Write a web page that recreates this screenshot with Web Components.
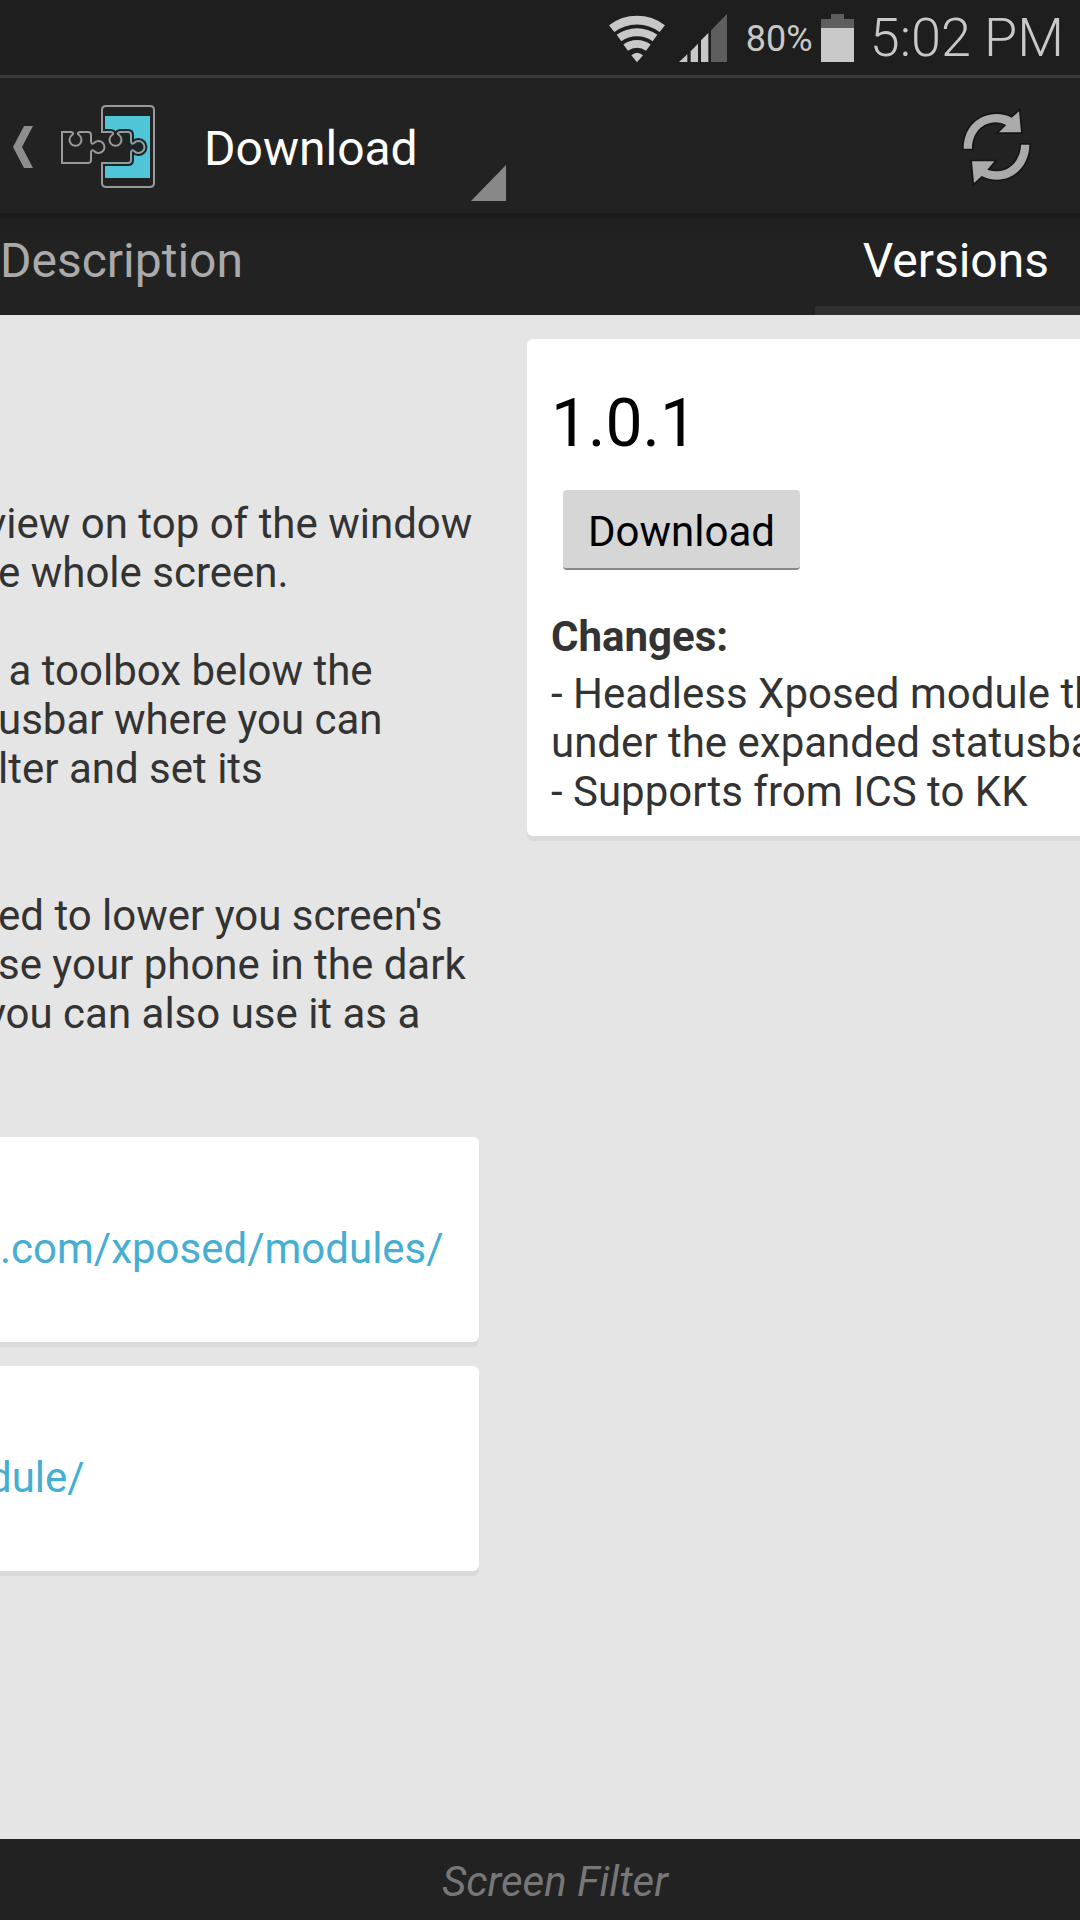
<!DOCTYPE html>
<html lang="en">
<head>
<meta charset="UTF-8">
<meta name="viewport" content="width=device-width, initial-scale=1.0">
<title>Download</title>
<style>
    body {
        margin: 0;
        font-family: Roboto, "Noto Sans", sans-serif;
        font-size: 42px;
        line-height: 49px;
        color: #333;
        background: #e5e5e5;
    }
</style>
</head>
<body>
<module-app></module-app>

<script>
// --- Status bar ---
class StatusBar extends HTMLElement {
    constructor() {
        super();
        this.attachShadow({ mode: 'open' });
    }

    connectedCallback() {
        this.shadowRoot.innerHTML = `
            <style>
                :host {
                    display: flex;
                    justify-content: flex-end;
                    align-items: center;
                    height: 75px;
                    padding-right: 16px;
                    background: #1e1e1e;
                    border-bottom: 3px solid #3a3a3a;
                    color: #c8c8c8;
                    white-space: nowrap;
                }
                svg { display: block; }
                .battery-level { font-size: 36px; margin: 0 8px 0 18px; padding-top: 3px; }
                .clock { font-size: 54px; font-weight: 300; margin-left: 16px; }
            </style>
            <svg width="120" height="50" viewBox="54 36 360 150" role="img" aria-label="Signal">
                <g fill="none" stroke="#c8c8c8">
                    <path stroke-width="26" d="M65 84A125 125 0 0 1 217 84" transform="translate(0 -1)"/>
                    <path stroke-width="24" d="M87 111A92 92 0 0 1 195 111"/>
                    <path stroke-width="23" d="M107 140A56 56 0 0 1 175 140"/>
                </g>
                <path fill="#c8c8c8" d="M141 184L124 163Q141 148 159 163Z"/>
                <path fill="#c8c8c8" d="M267 183L292 160V183ZM302 183V151L324 128V183ZM333 183V118L355 96V183Z"/>
                <path fill="#5e5e5e" d="M363 183V88L411 39V183Z"/>
            </svg>
            <span class="battery-level">${this.getAttribute('battery')}</span>
            <svg width="33" height="48" viewBox="0 0 33 48" role="img" aria-label="Battery">
                <path fill="#5e5e5e" d="M10 0H23V5H33V14H0V5H10Z"/>
                <path fill="#c8c8c8" d="M0 14H33V48H0Z"/>
            </svg>
            <span class="clock">${this.getAttribute('time')}</span>
        `;
    }
}

// --- Action bar ---
class ActionBar extends HTMLElement {
    constructor() {
        super();
        this.attachShadow({ mode: 'open' });
    }

    connectedCallback() {
        this.shadowRoot.innerHTML = `
            <style>
                :host {
                    display: flex;
                    align-items: center;
                    height: 135px;
                    padding: 0 46px 0 12px;
                    background: #222;
                }
                button {
                    display: flex;
                    align-items: center;
                    gap: 24px;
                    padding: 3px 0 0;
                    border: 0;
                    background: none;
                }
                svg { display: block; }
                .spinner {
                    position: relative;
                    width: 302px;
                    height: 135px;
                    margin-left: 46px;
                }
                select {
                    width: 100%;
                    height: 100%;
                    padding: 6px 0 0;
                    border: 0;
                    appearance: none;
                    background: none;
                    color: #fff;
                    font: 48px Roboto, sans-serif;
                }
                .spinner svg {
                    position: absolute;
                    right: 0;
                    bottom: 12px;
                    pointer-events: none;
                }
                .refresh { margin-left: auto; }
            </style>
            <button class="up" aria-label="Navigate up">
                <svg width="22" height="44" viewBox="0 0 22 44">
                    <path fill="#8e8e8e" d="M12 1H21L10 22L21 43H12L1 22Z"/>
                </svg>
                <svg width="100" height="90" viewBox="58 102 100 90">
                    <defs>
                        <path id="piece" d="M61 132H71Q75 133 72 135A6 6 0 1 0 79 135Q76 133 80 132H88Q91 132 91 135V141Q91 145 94 143A6 6 0 1 1 94 151Q91 149 91 153V160Q91 163 88 163H61"/>
                    </defs>
                    <path fill="#50c5d8" d="M105 116H150V178H105Z"/>
                    <use href="#piece" x="40" fill="#222" stroke="#14282c" stroke-width="6"/>
                    <path fill="#222" d="M92 134H106V162H92Z"/>
                    <path fill="#222" d="M108 131H122V148H108Z"/>
                    <path fill="none" stroke="#999" stroke-width="2" d="M102 132V110Q102 106 106 106H150Q154 106 154 110V183Q154 187 150 187H106Q102 187 102 183V163"/>
                    <use href="#piece" x="40" fill="none" stroke="#999" stroke-width="2"/>
                    <use href="#piece" fill="none" stroke="#999" stroke-width="2"/>
                    <path stroke="#999" stroke-width="2" d="M62 131V164"/>
                </svg>
            </button>
            <div class="spinner">
                <select aria-label="Section">
                    <option>Download</option>
                </select>
                <svg width="35" height="36" viewBox="0 0 35 36">
                    <path fill="#888" d="M35 0V36H0Z"/>
                </svg>
            </div>
            <button class="refresh" aria-label="Refresh">
                <svg width="74" height="82" viewBox="180 110 222 246">
                    <g fill="#aaa" stroke="#151515" stroke-width="10" paint-order="stroke">
                        <path d="M191 238C191 175 235 134 290 134Q315 134 335 145L357 126L363 189H297L319 167Q305 159 288 159C245 159 216 193 216 238Z"/>
                        <path d="M388 226C388 285 345 331 292 331Q265 331 245 320L222 341L216 276H283L262 301Q275 306 292 306C330 306 363 270 363 226Z"/>
                    </g>
                </svg>
            </button>
        `;
    }
}

// --- Tabs ---
class TabStrip extends HTMLElement {
    constructor() {
        super();
        this.attachShadow({ mode: 'open' });
    }

    connectedCallback() {
        this.shadowRoot.innerHTML = `
            <style>
                :host {
                    display: flex;
                    justify-content: space-between;
                    height: 102px;
                    background: linear-gradient(#1b1b1b, #1b1b1b 5px, #1f1f1f 7px, #222 28px);
                }
                button {
                    padding: 2px 0 0;
                    border: 0;
                    border-bottom: 9px solid transparent;
                    background: none;
                    color: #aaa;
                    font: 48px Roboto, sans-serif;
                }
                button[aria-selected="true"] {
                    padding: 2px 31px 0 48px;
                    border-color: #303030;
                    color: #fff;
                }
            </style>
            <button role="tab" aria-selected="false">Description</button>
            <button role="tab" aria-selected="true">Versions</button>
        `;
    }
}

// --- Card ---
class InfoCard extends HTMLElement {
    constructor() {
        super();
        this.attachShadow({ mode: 'open' });
    }

    connectedCallback() {
        this.shadowRoot.innerHTML = `
            <style>
                :host {
                    display: block;
                    background: #fff;
                    border-radius: 6px;
                    box-shadow: 0 5px 0 #dadada;
                    white-space: nowrap;
                }
            </style>
            <slot></slot>
        `;
    }
}

// --- Description page, halfway swiped out to the left ---
class DescriptionPage extends HTMLElement {
    constructor() {
        super();
        this.attachShadow({ mode: 'open' });
    }

    connectedCallback() {
        this.shadowRoot.innerHTML = `
            <style>
                :host {
                    display: block;
                    overflow: hidden;
                    padding: 184px 24px 24px 0;
                }
                p { margin: 0 0 49px -2px; white-space: pre; }
                p.last { margin: 98px 0 99px -2px; }
                .cut { margin-left: -12px; }
                info-card {
                    margin: 0 0 24px -24px;
                    padding: 87px 24px 69px;
                }
                a { color: #45aed2; text-decoration: none; }
            </style>
            <p><span class="cut">view on top of the window</span><br>e whole screen.</p>
            <p> a toolbox below the<br>usbar where you can<br>lter and set its</p>
            <p class="last">ed to lower you screen's<br>se your phone in the dark<br><span class="cut">you can also use it as a</span></p>
            <info-card><a href="#">.com/xposed/modules/</a></info-card>
            <info-card><a class="cut" href="#">dule/</a></info-card>
        `;
    }
}

// --- Versions page ---
class VersionsPage extends HTMLElement {
    constructor() {
        super();
        this.attachShadow({ mode: 'open' });
    }

    connectedCallback() {
        this.shadowRoot.innerHTML = `
            <style>
                :host {
                    display: block;
                    overflow: hidden;
                    padding: 24px 0 24px 24px;
                }
                info-card {
                    margin-right: -24px;
                    padding: 46px 24px 20px;
                }
                h2 {
                    margin: 0 0 28px;
                    color: #000;
                    font-size: 66px;
                    line-height: 77px;
                    font-weight: 400;
                }
                button {
                    display: block;
                    height: 80px;
                    margin: 0 12px 42px;
                    padding: 5px 25px 0;
                    border: 0;
                    border-bottom: 2px solid #888;
                    border-radius: 4px;
                    background: #d6d6d6;
                    color: #000;
                    font: 42px Roboto, sans-serif;
                }
                h3 { margin: 0 0 8px; font-size: 42px; }
                p { margin: 0; }
            </style>
            <info-card>
                <h2>1.0.1</h2>
                <button>Download</button>
                <h3>Changes:</h3>
                <p>- Headless Xposed module th<br>under the expanded statusba<br>- Supports from ICS to KK</p>
            </info-card>
        `;
    }
}

// --- App shell ---
class ModuleApp extends HTMLElement {
    constructor() {
        super();
        this.attachShadow({ mode: 'open' });
    }

    connectedCallback() {
        this.shadowRoot.innerHTML = `
            <style>
                :host {
                    display: flex;
                    flex-direction: column;
                    min-height: 100vh;
                }
                main {
                    flex: 1;
                    display: grid;
                    grid-template-columns: minmax(0, 503fr) minmax(0, 577fr);
                }
                footer {
                    padding: 18px 0 14px 30px;
                    background: #222;
                    color: #777;
                    font-style: italic;
                    text-align: center;
                }
            </style>
            <status-bar battery="80%" time="5:02 PM"></status-bar>
            <action-bar></action-bar>
            <tab-strip role="tablist"></tab-strip>
            <main>
                <description-page></description-page>
                <versions-page></versions-page>
            </main>
            <footer>Screen Filter</footer>
        `;
    }
}

customElements.define('status-bar', StatusBar);
customElements.define('action-bar', ActionBar);
customElements.define('tab-strip', TabStrip);
customElements.define('info-card', InfoCard);
customElements.define('description-page', DescriptionPage);
customElements.define('versions-page', VersionsPage);
customElements.define('module-app', ModuleApp);
</script>
</body>
</html>
